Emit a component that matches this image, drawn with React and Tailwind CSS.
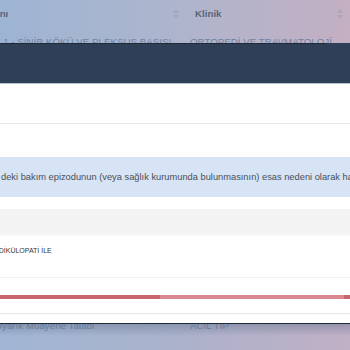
import React from 'react';

const font = { fontFamily: '"Liberation Sans", Arial, sans-serif' };

const SortIcon = () => (
  <svg width="6" height="10" viewBox="0 0 6 10" className="opacity-30">
    <path d="M3 0 L6 4 H0 Z M3 10 L0 6 H6 Z" fill="#8a90a0" />
  </svg>
);

export default function App() {
  return (
    <div className="w-[350px] h-[350px] overflow-hidden flex flex-col bg-[#b2b4cc] text-[9.75px]" style={font}>
      {/* dimmed table behind modal */}
      <div className="h-[43px] shrink-0 bg-gradient-to-r from-[#9db4d3] via-[#adb5cd] to-[#c4afc3] flex flex-col overflow-hidden">
        <div className="h-[28px] shrink-0 flex items-center font-bold text-[#5c6479]">
          <div className="w-[190px] flex items-center justify-between pr-[11px]">
            <span className="ml-[-11px]">Tanı</span>
            <SortIcon />
          </div>
          <div className="flex-1 flex items-center justify-between pl-[5px] pr-[7px]">
            <span>Klinik</span>
            <SortIcon />
          </div>
        </div>
        <div className="flex text-[#6f82a3] whitespace-nowrap leading-none pt-[9px]">
          <span className="w-[195px] ml-[-5px]">1.1 - SİNİR KÖKÜ VE PLEKSUS BASISI</span>
          <span>ORTOPEDİ VE TRAVMATOLOJİ</span>
        </div>
      </div>

      {/* modal */}
      <div className="shrink-0 h-[280px] bg-white flex flex-col">
        <div className="h-[1px] shrink-0 flex">
          <div className="w-[327px] bg-[#1f2a38]"></div>
          <div className="flex-1 bg-[#2f3f57]"></div>
        </div>
        <div className="h-[40px] shrink-0 bg-[#2f3f57] border-b border-[#b9c2cf]"></div>
        <div className="h-[40px] shrink-0 border-b border-[#e6e6e6]"></div>
        <div className="h-[33px] shrink-0"></div>
        <div className="h-[40px] shrink-0 bg-[#d6e4f5] flex items-center pt-[2px] text-[9.3px] text-[#4b4f57] whitespace-nowrap">
          <span className="pl-[1px]">deki bakım epizodunun (veya sağlık kurumunda bulunmasının) esas nedeni olarak hastaneye</span>
        </div>
        <div className="h-[12px] shrink-0"></div>
        <div className="h-[27px] shrink-0 bg-[#f3f3f3] border-b-2 border-[#f8f8f8]"></div>
        <div className="h-[42px] shrink-0 border-b border-[#f1f1f1] pt-[11px] text-[7px] text-[#33363b] whitespace-nowrap leading-none">
          <span className="ml-[-11px]">RADİKÜLOPATİ İLE</span>
        </div>
        <div className="h-[17px] shrink-0"></div>
        <div className="h-[4px] shrink-0 flex">
          <div className="w-[160px] bg-[#c8646c]"></div>
          <div className="w-[184px] bg-[#d98890]"></div>
          <div className="flex-1 bg-[#c8646c]"></div>
        </div>
        <div className="h-[15px] shrink-0 border-b border-[#e6e6e6]"></div>
        <div className="flex-1"></div>
      </div>

      {/* dimmed table below modal */}
      <div className="flex-1 border-t border-[#1f2a38] bg-gradient-to-r from-[#a0b6d4] via-[#aab2cb] to-[#c1b0c6] relative overflow-hidden">
        <div className="absolute inset-x-0 top-0 h-[12px] bg-gradient-to-b from-[#5a6a86]/40 to-transparent"></div>
        <div className="flex text-[#7083a4] whitespace-nowrap leading-none mt-[-3px]">
          <span className="w-[195px] ml-[-5px]">Uyarık Muayene Talabı</span>
          <span>ACİL TIP</span>
        </div>
      </div>
    </div>
  );
}
